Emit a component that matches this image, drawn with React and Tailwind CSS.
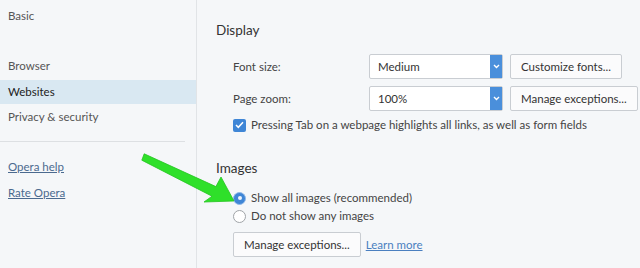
import React from 'react'

// Opera settings — Websites page (Display / Images)
const font = { fontFamily: 'Lato, "Noto Sans", sans-serif' }

function Select({ value }) {
  return (
    <div className="flex h-[25px] w-[134px] items-stretch rounded-[2px] border border-[#c9cdd2] bg-white">
      <div className="flex flex-1 items-center pl-[8px] text-[11.5px] text-[#333]">{value}</div>
      <div className="flex w-[12px] items-center justify-center bg-[#4a8fdb]">
        <svg width="7" height="5" viewBox="0 0 7 5">
          <path d="M1 1l2.5 2.5L6 1" stroke="white" strokeWidth="1.4" fill="none" />
        </svg>
      </div>
    </div>
  )
}

function Button({ children, className = '' }) {
  return (
    <button className={`h-[25px] whitespace-nowrap rounded-[2px] border border-[#c9cdd2] bg-[#fbfbfc] px-[10px] text-[11.5px] text-[#333] ${className}`}>
      {children}
    </button>
  )
}

function Radio({ checked }) {
  return checked ? (
    <span className="flex h-[13px] w-[13px] items-center justify-center rounded-full border border-[#8fb8e8] bg-[#3f86d6]">
      <span className="h-[4px] w-[4px] rounded-full bg-white/90" />
    </span>
  ) : (
    <span className="h-[13px] w-[13px] rounded-full border border-[#a0a4a8] bg-white" />
  )
}

export default function App() {
  return (
    <div className="relative flex h-[268px] w-[640px] overflow-hidden bg-[#f5f7f9]" style={font}>
      <aside className="flex w-[197px] shrink-0 flex-col border-r border-[#e1e4e7] text-[11.5px] text-[#555]">
        <div className="flex h-[20px] items-center px-[8px] mt-[6px]">Basic</div>
        <div className="flex h-[20px] items-center px-[8px] mt-[30px]">Browser</div>
        <div className="flex h-[24px] items-center bg-[#d9e8f2] px-[8px] mt-[4px] text-[#222]">Websites</div>
        <div className="flex h-[26px] items-center px-[8px]">Privacy &amp; security</div>
        <div className="mt-[11px] mr-[11px] h-px bg-[#dde0e3]" />
        <div className="mt-[15px] flex h-[20px] items-center px-[8px]">
          <a className="text-[#4b6a8f] underline">Opera help</a>
        </div>
        <div className="mt-[6px] flex h-[20px] items-center px-[8px]">
          <a className="text-[#4b6a8f] underline">Rate Opera</a>
        </div>
      </aside>

      <main className="flex flex-1 flex-col pl-[19px] pt-[20px] text-[11.5px] text-[#444]">
        <h2 className="flex h-[20px] items-center text-[13.5px] text-[#333]">Display</h2>
        <div className="ml-[17px] mt-[14px] flex items-center">
          <span className="w-[136px]">Font size:</span>
          <Select value="Medium" />
          <Button className="ml-[7px]">Customize fonts...</Button>
        </div>
        <div className="ml-[17px] mt-[7px] flex items-center">
          <span className="w-[136px]">Page zoom:</span>
          <Select value="100%" />
          <Button className="ml-[7px]">Manage exceptions...</Button>
        </div>
        <label className="ml-[17px] mt-[5px] flex h-[18px] items-center gap-[5px]">
          <span className="flex h-[13px] w-[13px] items-center justify-center rounded-[2px] bg-[#3f86d6]">
            <svg width="9" height="8" viewBox="0 0 9 8">
              <path d="M1 4l2.3 2.3L8 1.2" stroke="white" strokeWidth="1.5" fill="none" />
            </svg>
          </span>
          <span>Pressing Tab on a webpage highlights all links, as well as form fields</span>
        </label>

        <h2 className="mt-[24px] flex h-[20px] items-center text-[13.5px] text-[#333]">Images</h2>
        <label className="ml-[17px] mt-[11px] flex h-[18px] items-center gap-[5px]">
          <Radio checked />
          <span>Show all images (recommended)</span>
        </label>
        <label className="ml-[17px] flex h-[18px] items-center gap-[5px]">
          <Radio />
          <span>Do not show any images</span>
        </label>
        <div className="ml-[17px] mt-[7px] flex items-center">
          <Button>Manage exceptions...</Button>
          <a className="ml-[5px] text-[#4a7fc0] underline">Learn more</a>
        </div>
      </main>

      <svg className="absolute left-0 top-0" width="640" height="268" viewBox="0 0 640 268">
        <polygon
          points="144.2,153.8 215.9,186.6 221,177 234,201 204,202 212,196.2 141.8,160.2"
          fill="#2fe02a"
          stroke="#25c421"
          strokeWidth="0.8"
          strokeLinejoin="round"
        />
      </svg>
    </div>
  )
}
